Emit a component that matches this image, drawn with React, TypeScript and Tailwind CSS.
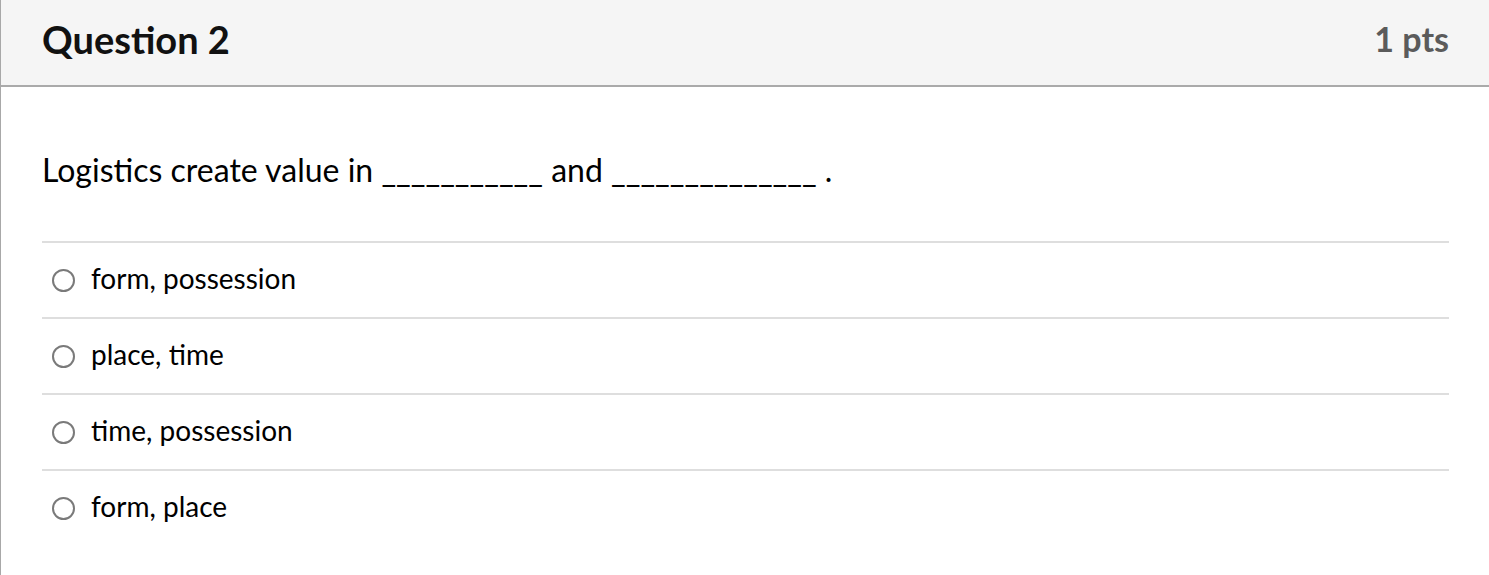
import React from "react";

const options = ["form, possession", "place, time", "time, possession", "form, place"];

export default function App() {
  return (
    <div
      className="w-[1489px] h-[575px] bg-white border-l border-[#a8a8a8] overflow-hidden"
      style={{ fontFamily: "Lato, 'Noto Sans', sans-serif" }}
    >
      <div className="h-[87px] bg-[#f5f5f5] border-b-2 border-[#aaaaaa] flex items-center justify-between pl-[41px] pr-[40px] pb-[8px]">
        <div className="text-[38px] font-bold text-[#111] leading-none">Question 2</div>
        <div className="text-[34px] font-bold text-[#5b5b5b] leading-none">1 pts</div>
      </div>
      <div className="pl-[41px] pr-[40px]">
        <div className="pt-[63px] pb-[51px] text-[32px] text-black leading-[40px] whitespace-pre">
          Logistics create value in ___________ and ______________ .
        </div>
        {options.map((o) => (
          <div key={o} className="border-t-2 border-[#dedede] h-[76px] flex items-center pl-[10px]">
            <span className="w-[23px] h-[23px] rounded-full border-2 border-[#7a7a7a] bg-white shrink-0" />
            <span className="ml-[16px] mb-[4px] text-[28px] text-black leading-none">{o}</span>
          </div>
        ))}
      </div>
    </div>
  );
}
